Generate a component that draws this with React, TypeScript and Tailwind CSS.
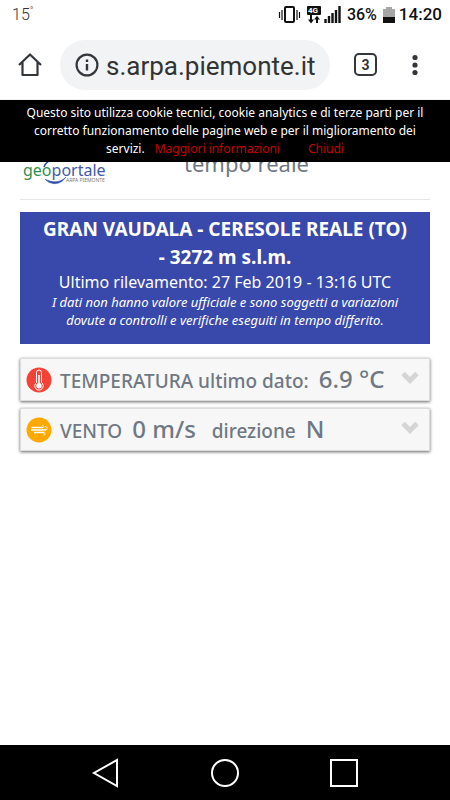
import type { ReactNode } from "react";

function StatusBar() {
    return (
        <div className="h-[30px] pl-3 pr-2 flex items-center justify-between text-[#111]">
            <span className="flex items-start font-light text-base leading-5 text-[#333]">
                15<span className="text-[10px] leading-3">°</span>
            </span>
            <div className="flex items-center font-medium">
                <svg width="68" height="20" viewBox="0 0 68 20" fill="none" className="mr-1">
                    <rect x="10" y="2" width="9" height="15" rx="1" stroke="#111" strokeWidth="2" />
                    <path d="M4.5 7v6M7 5v10M22 5v10M24.5 7v6" stroke="#111" strokeWidth="1.200" />
                    <rect x="32" y="1" width="14" height="9" rx="1" fill="#111" />
                    <text x="33" y="8" fontSize="8" fontWeight="700" fill="#fff">4G</text>
                    <path d="M36 10v7M42 18v-6" stroke="#111" strokeWidth="2" />
                    <path d="M33 14.500h6L36 18.500zM39 14.500h6L42 10.800z" fill="#111" />
                    <path d="M50.500 18v-4M54 18v-7M57.500 18V8M61 18V5M64.500 18V1" stroke="#111" strokeWidth="2.400" />
                </svg>
                <span className="text-base">36%</span>
                <svg width="12" height="18" viewBox="0 0 12 18" className="ml-1.5 mr-1">
                    <path d="M3 1h6v2h3v8H0V3h3z" fill="#a6a6a6" />
                    <path d="M0 11h12v6H0z" fill="#111" />
                </svg>
                <span className="text-[17px]">14:20</span>
            </div>
        </div>
    );
}

function BrowserBar() {
    return (
        <div className="h-[70px] flex items-center pl-[18px] pr-8 border-b border-[#f1f1f1]">
            <button aria-label="Home">
                <svg width="24" height="24" viewBox="0 0 24 24" fill="none" stroke="#33363b" strokeWidth="2.200" strokeLinejoin="round">
                    <path d="M1 12L12 1.500L23 12M4.500 9v13h15V9" />
                </svg>
            </button>
            <div className="ml-[18px] flex-1 min-w-0 h-[50px] rounded-full bg-[#f1f3f4] flex items-center pl-[15px] pr-3">
                <svg width="24" height="24" viewBox="0 0 24 24" fill="none" stroke="#33363b" strokeWidth="2.200" className="shrink-0">
                    <circle cx="12" cy="12" r="10.400" />
                    <path d="M12 6.500v2.500M12 11v6.500" strokeWidth="2.400" />
                </svg>
                <input
                    aria-label="Indirizzo"
                    defaultValue="s.arpa.piemonte.it"
                    className="ml-[7px] pt-1 w-full min-w-0 bg-transparent text-[26px] text-[#333] outline-none"
                />
            </div>
            <button
                aria-label="Schede aperte"
                className="ml-6 w-[23px] h-[23px] rounded-[5px] border-2 border-[#33363b] flex items-center justify-center text-sm font-bold text-[#33363b]"
            >
                3
            </button>
            <button aria-label="Menu" className="ml-[35px]">
                <svg width="6" height="22" viewBox="0 0 6 22" fill="#33363b">
                    <circle cx="3" cy="3.500" r="2.600" />
                    <circle cx="3" cy="11" r="2.600" />
                    <circle cx="3" cy="18.500" r="2.600" />
                </svg>
            </button>
        </div>
    );
}

function CookieBanner() {
    return (
        <div className="absolute inset-x-0 top-0 h-[62px] pt-1 bg-black text-white text-xs leading-[18px] text-center whitespace-nowrap">
            <p>Questo sito utilizza cookie tecnici, cookie analytics e di terze parti per il</p>
            <p>corretto funzionamento delle pagine web e per il miglioramento dei</p>
            <div className="flex justify-center">
                <span>servizi.</span>
                <a href="#info" className="ml-2.5 text-[#c80000]">Maggiori informazioni</a>
                <a href="#chiudi" className="ml-7 text-[#c80000]">Chiudi</a>
            </div>
        </div>
    );
}

function GeoportaleLogo() {
    return (
        <svg width="84" height="32" viewBox="0 0 84 32" fill="none">
            <path d="M21 12C23 6 31 2 38 6" stroke="#2c4ea5" strokeWidth="1.500" />
            <path d="M22 24C27 30 37 31 43 22C37 28 29 28 22 24z" fill="#2c4ea5" stroke="#2c4ea5" strokeWidth="0.500" />
            <text x="0" y="21" fontSize="16" fill="#2f9150">
                geo<tspan fill="#3d5ba9">portale</tspan>
            </text>
            <text x="43" y="27" fontSize="5" fill="#777">ARPA PIEMONTE</text>
        </svg>
    );
}

function ThermometerIcon() {
    return (
        <svg width="26" height="26" viewBox="0 0 26 26" fill="none" className="shrink-0">
            <circle cx="13" cy="13" r="12.500" fill="#f44336" />
            <path d="M10.500 15.500V5.500a2.500 2.500 0 0 1 5 0V15.500a4.200 4.200 0 1 1-5 0z" stroke="#fff" strokeWidth="1" />
            <path d="M13 8v9" stroke="#fff" strokeWidth="1.500" />
            <circle cx="13" cy="18.800" r="2.700" fill="#fff" />
        </svg>
    );
}

function WindIcon() {
    return (
        <svg width="26" height="26" viewBox="0 0 26 26" fill="none" className="shrink-0">
            <circle cx="13" cy="13" r="12.500" fill="#ffa800" />
            <path d="M5.500 10.500H17M5 13h15M8 15.500h10" stroke="#fff" strokeWidth="1.600" />
            <path d="M16.500 8.500c1.500 0 2 2 0 2M19 9.500c3 0 3 3.500 0 3.500M17.500 15.500c2 0 2 2.500 0 2.500" stroke="#fff" strokeWidth="1" />
        </svg>
    );
}

function SensorRow({ icon, children }: { icon: ReactNode; children: ReactNode }) {
    return (
        <button className="w-full h-[43px] pl-[5px] pr-2.5 flex items-center bg-[#f7f7f7] border border-[#dcdcdc] shadow-[0_1px_3px_rgba(0,0,0,0.6)] text-[#6f7883] whitespace-nowrap">
            {icon}
            <span className="ml-2 flex-1 flex items-baseline text-[19px] font-medium">{children}</span>
            <svg width="18" height="12" viewBox="0 0 18 12" fill="none" stroke="#d5d5d5" strokeWidth="5" className="shrink-0 mb-1">
                <path d="M2 1.500l7 7 7-7" />
            </svg>
        </button>
    );
}

function NavigationBar() {
    return (
        <nav className="mt-auto h-[55px] bg-black flex items-center justify-center gap-[91px]">
            <button aria-label="Indietro">
                <svg width="28" height="30" viewBox="0 0 28 30" fill="none" stroke="#fff" strokeWidth="2">
                    <path d="M25 2v26L2 15z" />
                </svg>
            </button>
            <button aria-label="Home">
                <svg width="28" height="30" viewBox="0 0 28 30" fill="none" stroke="#fff" strokeWidth="2">
                    <circle cx="14" cy="15" r="13" />
                </svg>
            </button>
            <button aria-label="Recenti">
                <svg width="28" height="30" viewBox="0 0 28 30" fill="none" stroke="#fff" strokeWidth="2">
                    <path d="M1 2h26v26H1z" />
                </svg>
            </button>
        </nav>
    );
}

export default function App() {
    return (
        <div className="min-h-screen flex flex-col bg-white font-['Roboto',sans-serif]">
            <header>
                <StatusBar />
                <BrowserBar />
            </header>

            <main className="relative px-5 font-['Noto_Sans',sans-serif]">
                <div className="h-[100px] flex items-end border-b border-[#e5e5e5]">
                    <div className="w-2/5 pl-[3px] pb-3">
                        <GeoportaleLogo />
                    </div>
                    <h1 className="pb-5 text-[22px] leading-8 text-[#6f7883]">tempo reale</h1>
                </div>
                <CookieBanner />

                <section className="mt-3 h-[132px] pt-[3px] bg-[#3949ab] text-white text-center whitespace-nowrap">
                    <h2 className="text-[19px] leading-7 font-bold">
                        GRAN VAUDALA - CERESOLE REALE (TO)
                        <br />- 3272 m s.l.m.
                    </h2>
                    <p className="text-base leading-[22px]">Ultimo rilevamento: 27 Feb 2019 - 13:16 UTC</p>
                    <p className="text-[13px] leading-[18px] italic">
                        I dati non hanno valore ufficiale e sono soggetti a variazioni
                        <br />
                        dovute a controlli e verifiche eseguiti in tempo differito.
                    </p>
                </section>

                <div className="mt-3.5 flex flex-col gap-[7px]">
                    <SensorRow icon={<ThermometerIcon />}>
                        TEMPERATURA ultimo dato:<span className="ml-2.5 text-2xl">6.9 °C</span>
                    </SensorRow>
                    <SensorRow icon={<WindIcon />}>
                        VENTO<span className="ml-2.5 text-2xl">0 m/s</span>
                        <span className="ml-4">direzione</span>
                        <span className="ml-2.5 text-2xl">N</span>
                    </SensorRow>
                </div>
            </main>

            <NavigationBar />
        </div>
    );
}
